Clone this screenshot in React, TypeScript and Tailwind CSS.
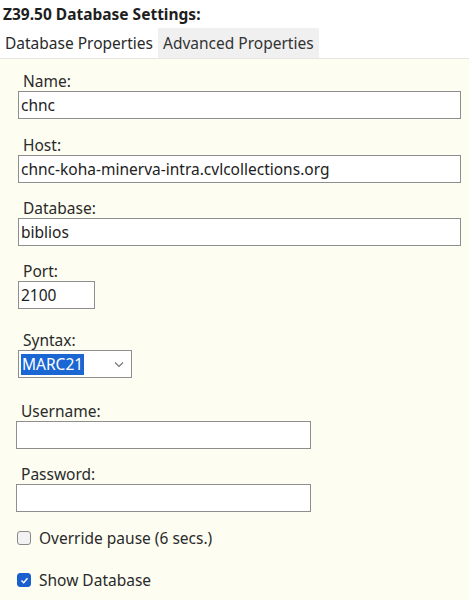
import React, { useState } from "react";

const Field = ({
  label,
  value,
  width,
  gap = "mt-4",
}: {
  label: string;
  value: string;
  width: string;
  gap?: string;
}) => (
  <div className={gap}>
    <div className="pl-[5px] h-[20px] leading-[20px]">{label}</div>
    <input
      defaultValue={value}
      className={`${width} h-[28px] border border-[#8e8e8e] bg-white px-[2px] text-[15.5px] text-[#222] outline-none`}
    />
  </div>
);

const Check = ({
  checked,
  onToggle,
  label,
  gap,
}: {
  checked: boolean;
  onToggle: () => void;
  label: string;
  gap: string;
}) => (
  <label className={`-ml-[1px] ${gap} flex items-center gap-[8px] h-[20px] leading-[20px] cursor-pointer`}>
    <span
      onClick={onToggle}
      className={`w-[14px] h-[14px] rounded-[3px] border flex items-center justify-center ${
        checked ? "bg-[#1a5fd0] border-[#1a5fd0]" : "bg-[#f2f2f2] border-[#8a8a8a]"
      }`}
    >
      {checked && (
        <svg width="9" height="9" viewBox="0 0 9 9" fill="none">
          <path d="M1.5 4.5 L3.7 6.7 L7.5 2.3" stroke="white" strokeWidth="1.4" />
        </svg>
      )}
    </span>
    <span>{label}</span>
  </label>
);

const App = () => {
  const [override, setOverride] = useState(false);
  const [showDb, setShowDb] = useState(true);

  return (
    <div
      className="w-[469px] h-[600px] bg-white text-[15.5px] text-[#2a2a2a] overflow-hidden"
      style={{ fontFamily: '"Noto Sans", "Open Sans", sans-serif' }}
    >
      <div className="px-[3px] pt-[3px] h-[28px] font-bold text-[15.5px] text-[#1e1e1e]">
        Z39.50 Database Settings:
      </div>
      <div className="flex h-[30px] items-stretch text-[15.5px]">
        <div className="px-[5px] pt-[3px] leading-[24px] bg-white">Database Properties</div>
        <div className="px-[5px] pt-[3px] leading-[24px] bg-[#f0f0f0] text-[#333]">
          Advanced Properties
        </div>
      </div>
      <div className="border-t border-[#e6e6e0] bg-[#fdfdf1] h-full pl-[18px] pr-[8px] pt-[12px]">
        <Field label="Name:" value="chnc" width="w-[443px]" gap="mt-0" />
        <Field
          label="Host:"
          value="chnc-koha-minerva-intra.cvlcollections.org"
          width="w-[443px]"
        />
        <Field label="Database:" value="biblios" width="w-[443px]" gap="mt-[15px]" />
        <Field label="Port:" value="2100" width="w-[77px]" gap="mt-[15px]" />

        <div className="mt-[21px]">
          <div className="pl-[5px] h-[20px] leading-[20px]">Syntax:</div>
          <div className="relative w-[114px] h-[28px] border border-[#8e8e8e] bg-white flex items-center pl-[2px]">
            <span className="bg-[#1a66d2] text-white px-[1px] leading-[21px]">MARC21</span>
            <svg
              className="absolute right-[7px] top-[10px]"
              width="10"
              height="7"
              viewBox="0 0 10 7"
              fill="none"
            >
              <path d="M1 1.5 L5 5.5 L9 1.5" stroke="#777" strokeWidth="1.2" />
            </svg>
          </div>
        </div>

        <div className="-ml-[2px]">
          <Field label="Username:" value="" width="w-[295px]" gap="mt-[23px]" />
          <Field label="Password:" value="" width="w-[295px]" gap="mt-[15px]" />
        </div>

        <Check
          checked={override}
          onToggle={() => setOverride(!override)}
          label="Override pause (6 secs.)"
          gap="mt-[16px]"
        />
        <Check
          checked={showDb}
          onToggle={() => setShowDb(!showDb)}
          label="Show Database"
          gap="mt-[22px]"
        />
      </div>
    </div>
  );
};

export default App;
